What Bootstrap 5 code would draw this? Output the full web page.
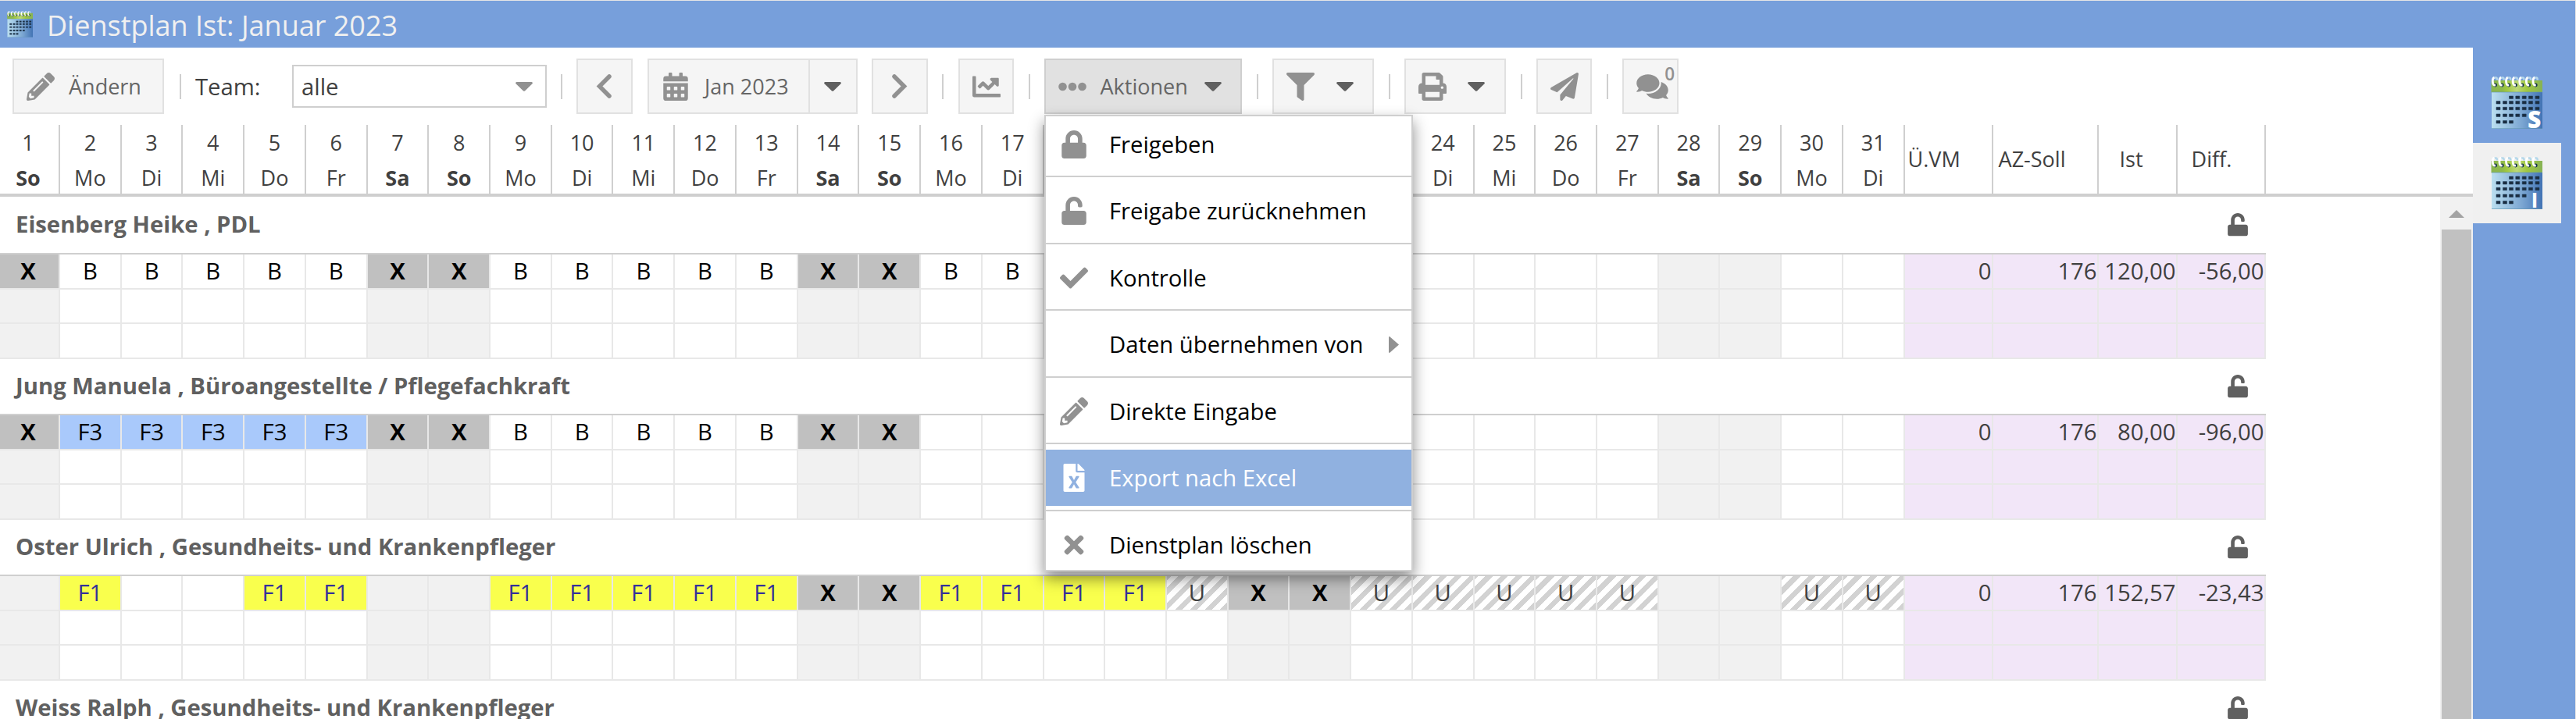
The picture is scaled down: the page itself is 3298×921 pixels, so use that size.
<!DOCTYPE html>
<html lang="de">
<head>
<meta charset="utf-8">
<meta name="viewport" content="width=device-width, initial-scale=1">
<title>Dienstplan</title>
<link rel="stylesheet" href="https://cdn.jsdelivr.net/npm/bootstrap@5.3.0/dist/css/bootstrap.min.css">
<style>
:root{--blue:#779fdb;--line:#cfcfcf;--grid:#e8e8e8}
html,body{height:100%}
body{font-family:"Open Sans","Noto Sans",sans-serif;font-size:29.25px;line-height:1;color:#404040;background:#fff;overflow:hidden}
svg{display:block;fill:currentColor;flex:none;overflow:visible}
.app{height:921px;width:3298px;border-top:1px solid #e6e6e6;border-right:1px solid #e6e6e6;background:var(--blue)}
.titlebar{height:60px;color:#f0f0f0;font-size:36px;padding-left:9px;gap:18px}
.titlebar span{padding-top:3px}
.pane{width:3166px;background:#fff}
.toolbar{height:99px;flex:none;padding:0 0 0 16px}
.tb{height:71px;border:2px solid #e1e1e1;border-radius:0;background:#f5f5f5;color:#919191;font-size:27px;line-height:1;padding:0;display:flex;align-items:center;flex:none}
.tb .txt{color:#666;text-align:left}
.tb.open{background:#e1e1e1;border-color:var(--line)}
.sep{width:2px;height:32px;background:var(--line);flex:none}
.tri{width:22px;height:12px;color:#606060}
.combo{width:326px;height:55px;border:2px solid var(--line);padding:3px 16px 0 10px}
.dayhead{height:92px;flex:none;border-bottom:4px solid var(--line)}
.hc{flex:none;width:78.73px;border-right:2px solid var(--line);font-size:27px;text-align:center;line-height:45px;padding-top:0}
.hc:first-child,.dc:first-child{width:77px;padding-right:3px}
.hc div{height:45px}
.hc.we div+div{font-weight:700}
.hs{line-height:88px;text-align:left}
.w1{width:113px!important}.w2{width:135px!important}.w3{width:101px!important}.w4{width:113px!important}
.grp{width:2901px;height:72px;border-bottom:2px solid var(--line);color:#606060;font-weight:700;padding:0 23px 0 20px}
.grp.first{height:74px}
.line{height:45px}.line.mid{height:44px}
.dc{flex:none;width:78.73px;border-right:2px solid var(--grid);border-bottom:2px solid var(--grid);text-align:center;line-height:42px;color:#000}
.dc.we{background:#f1f1f1}
.dc.x{background:#c0c0c0;font-weight:700}
.dc.f3{background:#a9c9fb}
.dc.f1{background:#f9ff4d;color:#34309a}
.dc.u{color:#404040;background:repeating-linear-gradient(-45deg,#d2d2d2 0,#d2d2d2 6.75px,#fff 6.75px,#fff 13.5px)}
.dc.sum{background:#f2e6f8;color:#404040;text-align:right}
.body-area{min-height:0}
.scroll{width:42px;background:#f1f1f1;padding:0 2px}
.scroll svg{margin:17px 0 15px 9px}
.thumb{background:#c1c1c1}
.menu{position:absolute;left:1337px;top:146px;width:472px;height:585px;background:#fff;border:2px solid var(--line);box-shadow:0 9px 18px rgba(0,0,0,.45);overflow:hidden;color:#000;z-index:5}
.mi{height:72px;padding-left:18px;padding-right:16px;flex:none}
.mi:first-child{margin-top:-.5px}
.mi .ico{width:36px;color:#919191;margin-right:27px}
.mi .lbl{padding-top:1.5px}
.mi.active{background:#90b1e0;color:#fff}.mi.active .ico{color:#fff}
.div{height:2.25px;margin:4.5px 0 6.75px;background:var(--line);flex:none}
.side{width:131px;padding-top:19px}
.tab{width:113px;height:103px}
.tab.sel{background:#f0f0f0}
</style>
</head>
<body>
<svg width="0" height="0" class="position-absolute">
<defs>
<linearGradient id="gb" x1="0" x2="1"><stop offset="0" stop-color="#bbdff0"/><stop offset=".6" stop-color="#7ba6d2"/><stop offset="1" stop-color="#4273b4"/></linearGradient>
<linearGradient id="gg" x1="0" x2="1"><stop offset="0" stop-color="#8ab54f"/><stop offset=".22" stop-color="#8fba4b"/><stop offset=".3" stop-color="#a0c740"/><stop offset=".5" stop-color="#bcd977"/><stop offset=".7" stop-color="#a0c740"/><stop offset="1" stop-color="#86b255"/></linearGradient>
<g id="ring"><circle cx="5.6" cy="11" r="2.4" fill="#16324a"/><path d="M4.5 1.5H6.5C8 1.5 8 3 8 4.500" fill="none" stroke="#b5d8ea" stroke-width="2.600"/><path d="M4.500 1.200C1.500 2 1.500 10 4.500 11.200H6" fill="none" stroke="#fff" stroke-width="2.800"/></g>
<symbol id="cal" viewBox="0 0 66 67"><path fill="url(#gg)" d="M.5 5h65.500v15.500H.5z"/><path fill="url(#gb)" d="M1 20h65v47H1z"/><path fill="#5f95b0" opacity=".6" d="M1 19.500h65v1H1zM1 66h65v1H1z"/>
<g fill="#1c2d40" stroke="#1c3b58" stroke-opacity=".55"><path id="dots" d=""/></g>
<use href="#ring"/><use href="#ring" x="8.700"/><use href="#ring" x="17.300"/><use href="#ring" x="25.900"/><use href="#ring" x="34.500"/><use href="#ring" x="43.100"/><use href="#ring" x="51.700"/></symbol>
<symbol id="lock" viewBox="0 0 448 512"><path d="M400 224h-24v-72C376 68.200 307.800 0 224 0S72 68.200 72 152v72H48c-26.500 0-48 21.500-48 48v192c0 26.500 21.500 48 48 48h352c26.500 0 48-21.500 48-48V272c0-26.500-21.500-48-48-48zm-104 0H152v-72c0-39.700 32.300-72 72-72s72 32.300 72 72v72z"/></symbol>
<symbol id="unlock" viewBox="0 0 448 512"><path d="M400 256H152V152.900c0-39.600 31.700-72.500 71.300-72.900 40-.4 72.700 32.100 72.700 72v16c0 13.300 10.700 24 24 24h32c13.300 0 24-10.700 24-24v-16C376 68 307.500-.3 223.500 0 139.500.3 72 69.500 72 153.500V256H48c-26.500 0-48 21.500-48 48v160c0 26.500 21.500 48 48 48h352c26.500 0 48-21.500 48-48V304c0-26.500-21.500-48-48-48z"/></symbol>
<symbol id="check" viewBox="0 0 512 512"><path d="M173.898 439.404l-166.400-166.400c-9.997-9.997-9.997-26.206 0-36.204l36.203-36.204c9.997-9.998 26.207-9.998 36.204 0L192 312.690 432.095 72.596c9.997-9.997 26.207-9.997 36.204 0l36.203 36.204c9.997 9.997 9.997 26.206 0 36.204l-294.400 294.401c-9.998 9.997-26.207 9.997-36.204-.001z"/></symbol>
<symbol id="times" viewBox="0 0 352 512"><path d="M242.720 256l100.070-100.070c12.280-12.280 12.280-32.190 0-44.480l-22.240-22.240c-12.280-12.280-32.190-12.280-44.480 0L176 189.280 75.930 89.210c-12.280-12.280-32.190-12.280-44.480 0L9.210 111.450c-12.280 12.280-12.280 32.190 0 44.480L109.280 256 9.210 356.070c-12.280 12.280-12.280 32.190 0 44.480l22.240 22.240c12.280 12.280 32.200 12.280 44.480 0L176 322.720l100.070 100.070c12.280 12.280 32.200 12.280 44.480 0l22.240-22.240c12.280-12.280 12.280-32.190 0-44.480L242.720 256z"/></symbol>
<symbol id="excel" viewBox="0 0 384 512"><path d="M224 136V0H24C10.700 0 0 10.700 0 24v464c0 13.300 10.700 24 24 24h336c13.300 0 24-10.700 24-24V160H248c-13.200 0-24-10.800-24-24zm60.100 106.500L224 336l60.100 93.500c5.100 8-.6 18.500-10.100 18.500h-34.900c-4.400 0-8.500-2.400-10.600-6.300C208.900 405.500 192 373 192 373c-6.400 14.800-10 20-36.600 68.800-2.100 3.900-6.100 6.300-10.500 6.300H110c-9.500 0-15.200-10.500-10.100-18.500l60.300-93.500-60.300-93.500c-5.200-8 .6-18.500 10.100-18.500h34.800c4.400 0 8.500 2.400 10.600 6.300 26.100 48.800 20 33.600 36.600 68.500 0 0 6.100-11.700 36.600-68.500 2.100-3.900 6.200-6.300 10.600-6.300H274c9.500-.1 15.200 10.400 10.100 18.400zM384 121.900v6.100H256V0h6.100c6.400 0 12.500 2.500 17 7l97.900 98c4.500 4.500 7 10.600 7 16.900z"/></symbol>
<symbol id="pencil" viewBox="0 0 512 512"><path d="M497.900 142.100l-46.100 46.100c-4.700 4.700-12.300 4.700-17 0l-111-111c-4.700-4.700-4.700-12.300 0-17l46.100-46.100c18.700-18.700 49.100-18.700 67.900 0l60.100 60.100c18.800 18.700 18.800 49.100 0 67.900zM284.200 99.800L21.600 362.400.4 483.900c-2.900 16.400 11.400 30.600 27.800 27.800l121.500-21.300 262.600-262.600c4.700-4.700 4.700-12.300 0-17l-111-111c-4.800-4.700-12.400-4.700-17.100 0zM124.100 339.900c-5.500-5.500-5.500-14.300 0-19.800l154-154c5.500-5.500 14.300-5.500 19.800 0s5.500 14.300 0 19.800l-154 154c-5.500 5.500-14.300 5.500-19.800 0zM88 424h48v36.300l-64.500 11.300-31.100-31.100L51.700 376H88v48z"/></symbol>
<symbol id="filter" viewBox="0 0 512 512"><path d="M487.976 0H24.028C2.710 0-8.047 25.866 7.058 40.971L192 225.941V432c0 7.831 3.821 15.170 10.237 19.662l80 55.980C298.020 518.690 320 507.493 320 487.980V225.941l184.947-184.970C520.021 25.896 509.338 0 487.976 0z"/></symbol>
<symbol id="plane" viewBox="0 0 512 512"><path d="M476 3.200L12.500 270.600c-18.100 10.400-15.800 35.600 2.200 43.200L121 358.400l287.300-253.200c5.500-4.900 13.300 2.600 8.600 8.300L176 407v80.500c0 23.600 28.500 32.900 42.500 15.800L282 426l124.600 52.200c14.200 6 30.400-2.900 33-18.200l72-432C515 7.800 493.300-6.800 476 3.200z"/></symbol>
<symbol id="print" viewBox="0 0 512 512"><path d="M448 192V77.250c0-8.490-3.370-16.620-9.370-22.630L393.370 9.370c-6-6-14.140-9.370-22.630-9.370H96C78.330 0 64 14.330 64 32v160c-35.350 0-64 28.650-64 64v112c0 8.840 7.160 16 16 16h48v96c0 17.670 14.330 32 32 32h320c17.670 0 32-14.330 32-32v-96h48c8.840 0 16-7.160 16-16V256c0-35.350-28.650-64-64-64zm-64 256H128v-96h256v96zm0-224H128V64h192v48c0 8.840 7.160 16 16 16h48v96zm48 72c-13.250 0-24-10.750-24-24 0-13.260 10.750-24 24-24s24 10.740 24 24c0 13.250-10.750 24-24 24z"/></symbol>
<symbol id="chart" viewBox="0 0 512 512"><path d="M496 384H64V80c0-8.840-7.160-16-16-16H16C7.160 64 0 71.160 0 80v336c0 17.670 14.330 32 32 32h464c8.840 0 16-7.160 16-16v-32c0-8.840-7.160-16-16-16zM464 96H345.940c-21.380 0-32.090 25.850-16.970 40.970l32.400 32.400L288 242.750l-73.370-73.370c-12.500-12.500-32.760-12.500-45.250 0l-68.690 68.690c-6.250 6.250-6.250 16.380 0 22.630l22.620 22.620c6.250 6.250 16.380 6.250 22.630 0L192 237.250l73.370 73.370c12.500 12.500 32.760 12.500 45.250 0l96-96 32.400 32.400c15.120 15.120 40.970 4.410 40.970-16.970V112c.01-8.840-7.150-16-15.990-16z"/></symbol>
<symbol id="comments" viewBox="0 0 576 512"><path d="M416 192c0-88.400-93.100-160-208-160S0 103.600 0 192c0 34.300 14.100 65.900 38 92-13.400 30.200-35.500 54.200-35.800 54.500-2.200 2.300-2.800 5.700-1.500 8.700S4.800 352 8 352c36.600 0 66.900-12.300 88.700-25 32.200 15.700 70.300 25 111.300 25 114.900 0 208-71.600 208-160zm122 220c23.900-26 38-57.700 38-92 0-66.900-53.500-124.200-129.300-148.100.9 6.600 1.300 13.300 1.300 20.100 0 105.900-107.700 192-240 192-10.800 0-21.300-.8-31.700-1.900C207.800 439.600 281.800 480 368 480c41 0 79.100-9.200 111.300-25 21.800 12.700 52.100 25 88.700 25 3.200 0 6.100-1.900 7.300-4.800 1.300-2.900.7-6.300-1.500-8.700-.3-.2-22.400-24.200-35.800-54.500z"/></symbol>
<symbol id="calfa" viewBox="0 0 448 512"><path fill-rule="evenodd" d="M0 192h448v272a48 48 0 0 1-48 48H48a48 48 0 0 1-48-48zM76 256a12 12 0 0 0-12 12v40a12 12 0 0 0 12 12h40a12 12 0 0 0 12-12v-40a12 12 0 0 0-12-12zM204 256a12 12 0 0 0-12 12v40a12 12 0 0 0 12 12h40a12 12 0 0 0 12-12v-40a12 12 0 0 0-12-12zM332 256a12 12 0 0 0-12 12v40a12 12 0 0 0 12 12h40a12 12 0 0 0 12-12v-40a12 12 0 0 0-12-12zM76 384a12 12 0 0 0-12 12v40a12 12 0 0 0 12 12h40a12 12 0 0 0 12-12v-40a12 12 0 0 0-12-12zM204 384a12 12 0 0 0-12 12v40a12 12 0 0 0 12 12h40a12 12 0 0 0 12-12v-40a12 12 0 0 0-12-12zM332 384a12 12 0 0 0-12 12v40a12 12 0 0 0 12 12h40a12 12 0 0 0 12-12v-40a12 12 0 0 0-12-12zM400 64h-48V16a16 16 0 0 0-16-16h-32a16 16 0 0 0-16 16v48H160V16a16 16 0 0 0-16-16h-32a16 16 0 0 0-16 16v48H48a48 48 0 0 0-48 48v48h448v-48a48 48 0 0 0-48-48z"/></symbol>
<symbol id="tri" viewBox="0 0 22 12"><path d="M1.500 0h19a1.400 1.400 0 0 1 1 2.300L12 11.400a1.500 1.500 0 0 1-2 0L.5 2.300A1.400 1.400 0 0 1 1.500 0z"/></symbol>
</defs>
</svg>

<div class="app position-relative">
  <header class="titlebar d-flex align-items-center">
    <svg width="33" height="34"><use href="#cal"/></svg><span>Dienstplan Ist: Januar 2023</span>
  </header>
  <div class="d-flex" style="height:860px">
    <main class="pane d-flex flex-column">
      <nav class="toolbar d-flex align-items-center">
        <button class="btn tb" style="width:194px"><svg width="36" height="36" style="margin-left:16px"><use href="#pencil"/></svg><span class="txt" style="margin-left:18px">Ändern</span></button>
        <i class="sep" style="margin-left:20px"></i>
        <span style="margin-left:18px;width:124px;padding-top:3px">Team:</span>
        <div class="combo d-flex align-items-center justify-content-between"><span>alle</span><svg class="tri" style="color:#919191;margin-top:-3px"><use href="#tri"/></svg></div>
        <i class="sep" style="margin:0 18px"></i>
        <button class="btn tb justify-content-center" style="width:72px"><svg width="20" height="31" style="margin-right:3px"><path d="M17 3L4.500 15.500 17 28" fill="none" stroke="currentColor" stroke-width="5.500" stroke-linecap="round"/></svg></button>
        <button class="btn tb" style="width:269px;margin:0 18px 0 19px"><svg width="32" height="36" style="margin-left:18px"><use href="#calfa"/></svg><span class="txt" style="margin-left:21px;width:133px">Jan 2023</span><i class="d-block h-100" style="width:2px;background:#e1e1e1"></i><svg class="tri" style="margin-left:18px"><use href="#tri"/></svg></button>
        <button class="btn tb justify-content-center" style="width:72px"><svg width="20" height="31"><path d="M3 3l12.500 12.500L3 28" fill="none" stroke="currentColor" stroke-width="5.500" stroke-linecap="round"/></svg></button>
        <i class="sep" style="margin:0 19px 0 18px"></i>
        <button class="btn tb justify-content-center" style="width:71px"><svg width="36" height="36"><use href="#chart"/></svg></button>
        <i class="sep" style="margin:0 17px 0 19px"></i>
        <button class="btn tb open" style="width:253px;margin-left:1px"><svg width="36" height="12" style="margin-left:15.500px"><circle cx="5.500" cy="6" r="5.300"/><circle cx="18" cy="6" r="5.300"/><circle cx="30.500" cy="6" r="5.300"/></svg><span class="txt" style="margin-left:18px;width:133px">Aktionen</span><svg class="tri"><use href="#tri"/></svg></button>
        <i class="sep" style="margin:0 18px 0 19px"></i>
        <button class="btn tb" style="width:130px"><svg width="36" height="36" style="margin-left:16px"><use href="#filter"/></svg><svg class="tri" style="margin-left:28px"><use href="#tri"/></svg></button>
        <i class="sep" style="margin:0 18px 0 19px"></i>
        <button class="btn tb" style="width:130px"><svg width="36" height="36" style="margin-left:16px"><use href="#print"/></svg><svg class="tri" style="margin-left:27px"><use href="#tri"/></svg></button>
        <i class="sep" style="margin:0 18px 0 19px"></i>
        <button class="btn tb justify-content-center" style="width:71px"><svg width="36" height="36"><use href="#plane"/></svg></button>
        <i class="sep" style="margin:0 18px 0 19px"></i>
        <button class="btn tb position-relative" style="width:72px"><svg width="41" height="36" style="margin-left:16px"><use href="#comments"/></svg><span class="position-absolute" style="right:3px;top:7px;font-size:22.500px;font-weight:600">0</span></button>
      </nav>
      <div class="dayhead d-flex" id="head"></div>
      <div class="body-area d-flex flex-grow-1 overflow-hidden">
        <section class="flex-grow-1" id="plan"></section>
        <div class="scroll d-flex flex-column"><svg width="20" height="10"><path fill="#a3a3a3" d="M0 10L10 0l10 10z"/></svg><div class="thumb flex-grow-1"></div></div>
      </div>
    </main>
    <aside class="side">
      <div class="tab" style="padding:18px 23px"><svg width="66" height="67" viewBox="0 0 66 67"><use href="#cal"/><text x="47" y="65.500" font-size="30" font-weight="800" fill="#fff">S</text></svg></div>
      <div class="tab sel" style="padding:18px 23px"><svg width="66" height="67" viewBox="0 0 66 67"><use href="#cal"/><text x="51.500" y="65" font-size="27" font-weight="700" fill="#fff">I</text></svg></div>
    </aside>
  </div>

  <div class="menu d-flex flex-column" id="menu"></div>
</div>
<script src="https://cdn.jsdelivr.net/npm/bootstrap@5.3.0/dist/js/bootstrap.bundle.min.js"></script>
<script>
const names = ['So','Mo','Di','Mi','Do','Fr','Sa'];
const isWe = d => (d - 1) % 7 === 0 || (d - 1) % 7 === 6;
const underMenu = d => d > 17 && d < 24;
const range = (a, b) => Array.from({length: b - a + 1}, (_, i) => a + i);

// day squares of the calendar icon
const xs = [9.5, 18, 26, 34.3, 42.7, 51, 59.5];
const weeks = [[26.7, 2, 6], [33.3, 0, 6], [41, 0, 6], [49.7, 0, 4], [58.3, 0, 2]];
document.getElementById('dots').setAttribute('d', weeks.map(([y, a, b]) =>
  range(a, b).map(i => `M${xs[i] - 2.5} ${y - 1.7}h5v3.400h-5z`).join('')).join(''));

let head = range(1, 31).map(d => `<div class="hc ${isWe(d) ? 'we' : ''}">` +
  (underMenu(d) ? '' : `<div>${d}</div><div>${names[(d - 1) % 7]}</div>`) + '</div>').join('');
[['Ü.VM', 'w1', 4], ['AZ-Soll', 'w2', 7], ['Ist', 'w3', 27], ['Diff.', 'w4', 18]].forEach(([t, w, p]) =>
  head += `<div class="hc hs ${w}" style="padding-left:${p}px">${t}</div>`);
document.getElementById('head').innerHTML = head;

const fill = (days, v) => Object.fromEntries(days.map(d => [d, v]));
const people = [
  {n: 'Eisenberg Heike , PDL', s: ['0', '176', '120,00', '-56,00'],
   d: {...fill(range(2, 6), 'B'), ...fill(range(9, 13), 'B'), ...fill([16, 17], 'B'), ...fill([1, 7, 8, 14, 15], 'X')}},
  {n: 'Jung Manuela , Büroangestellte / Pflegefachkraft', s: ['0', '176', '80,00', '-96,00'],
   d: {...fill(range(2, 6), 'F3'), ...fill(range(9, 13), 'B'), ...fill([1, 7, 8, 14, 15], 'X')}},
  {n: 'Oster Ulrich , Gesundheits- und Krankenpfleger', s: ['0', '176', '152,57', '-23,43'],
   d: {...fill([2, 5, 6, 9, 10, 11, 12, 13, 16, 17, 18, 19], 'F1'), ...fill([14, 15, 21, 22], 'X'), ...fill([20, 23, 24, 25, 26, 27, 30, 31], 'U')}},
  {n: 'Weiss Ralph , Gesundheits- und Krankenpfleger', s: ['', '', '', ''], d: {}}
];
document.getElementById('plan').innerHTML = people.map((p, k) => {
  const rows = [0, 1, 2].map(r => `<div class="line d-flex ${r === 1 ? 'mid' : ''}">` +
    range(1, 31).map(d => { const v = r ? '' : p.d[d] || ''; return `<div class="dc ${isWe(d) ? 'we' : ''} ${v.toLowerCase()}">${v}</div>`; }).join('') +
    p.s.map((v, i) => `<div class="dc sum w${i + 1}">${r ? '' : v}</div>`).join('') + '</div>').join('');
  return `<div class="grp d-flex align-items-center justify-content-between ${k ? '' : 'first'}"><span>${p.n}</span><svg width="26" height="29.500"><use href="#unlock"/></svg></div>${rows}`;
}).join('');

const items = [['lock', 32, 'Freigeben'], ['unlock', 32, 'Freigabe zurücknehmen'], ['check', 36, 'Kontrolle'], ['', 0, 'Daten übernehmen von'], ['pencil', 36, 'Direkte Eingabe'], ['excel', 28, 'Export nach Excel'], ['times', 26, 'Dienstplan löschen']];
document.getElementById('menu').innerHTML = items.map(([ic, w, t], i) =>
  `<div class="mi d-flex align-items-center ${i === 5 ? 'active' : ''}"><span class="ico d-flex justify-content-center">${ic ? `<svg width="${w}" height="36"><use href="#${ic}"/></svg>` : ''}</span><span class="lbl">${t}</span>${i === 3 ? '<svg class="ms-auto" width="13" height="21" style="color:#919191"><path d="M1 0l12 10.500L1 21q-1 0-1-1V1q0-1 1-1z"/></svg>' : ''}</div>`).join('<div class="div"></div>');
</script>
</body>
</html>
